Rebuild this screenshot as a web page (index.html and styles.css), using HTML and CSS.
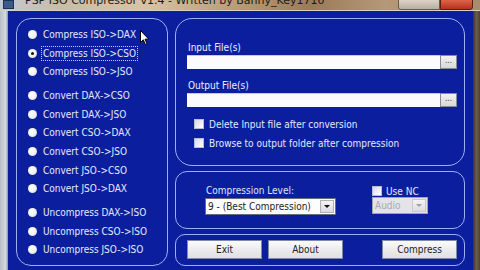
FILE: index.html
```html
<!DOCTYPE html>
<html>
<head>
<meta charset="utf-8">
<title>PSP ISO Compressor</title>
<link rel="stylesheet" href="styles.css">
</head>
<body>
<div class="win">
  <div class="titlebar">
    <div class="ticon"></div>
    <div class="ttext">PSP ISO Compressor v1.4 - Written by Banny_Key1710</div>
    <div class="tfill"></div>
    <div class="tbtns"></div>
    <div class="tclose"></div>
    <div class="tend"></div>
  </div>
  <div class="main">
    <div class="frame-l"></div>
    <div class="client">
      <div class="panel left">
        <div class="group">
          <div class="radio"><span class="dot"></span><span class="lbl">Compress ISO-&gt;DAX</span></div>
          <div class="radio"><span class="dot checked"></span><span class="lbl focus">Compress ISO-&gt;CSO</span></div>
          <div class="radio"><span class="dot"></span><span class="lbl">Compress ISO-&gt;JSO</span></div>
        </div>
        <div class="group">
          <div class="radio"><span class="dot"></span><span class="lbl">Convert DAX-&gt;CSO</span></div>
          <div class="radio"><span class="dot"></span><span class="lbl">Convert DAX-&gt;JSO</span></div>
          <div class="radio"><span class="dot"></span><span class="lbl">Convert CSO-&gt;DAX</span></div>
          <div class="radio"><span class="dot"></span><span class="lbl">Convert CSO-&gt;JSO</span></div>
          <div class="radio"><span class="dot"></span><span class="lbl">Convert JSO-&gt;CSO</span></div>
          <div class="radio"><span class="dot"></span><span class="lbl">Convert JSO-&gt;DAX</span></div>
        </div>
        <div class="group">
          <div class="radio"><span class="dot"></span><span class="lbl">Uncompress DAX-&gt;ISO</span></div>
          <div class="radio"><span class="dot"></span><span class="lbl">Uncompress CSO-&gt;ISO</span></div>
          <div class="radio"><span class="dot"></span><span class="lbl">Uncompress JSO-&gt;ISO</span></div>
        </div>
      </div>
      <div class="rightcol">
        <div class="panel files">
          <div class="flabel">Input File(s)</div>
          <div class="field"><div class="input"></div><div class="browse">...</div></div>
          <div class="flabel out">Output File(s)</div>
          <div class="field"><div class="input"></div><div class="browse">...</div></div>
          <div class="check first"><span class="box"></span><span>Delete Input file after conversion</span></div>
          <div class="check"><span class="box"></span><span>Browse to output folder after compression</span></div>
        </div>
        <div class="panel level">
          <div class="col1">
            <div class="llabel">Compression Level:</div>
            <div class="select"><span class="stext">9 - (Best Compression)</span><span class="arrow"><span class="tri"></span></span></div>
          </div>
          <div class="col2">
            <div class="nc"><span class="box"></span><span>Use NC</span></div>
            <div class="select disabled"><span class="stext">Audio</span><span class="arrow"><span class="tri"></span></span></div>
          </div>
        </div>
        <div class="panel actions">
          <div class="btn">Exit</div>
          <div class="btn">About</div>
          <div class="btn push">Compress</div>
        </div>
      </div>
    </div>
    <div class="frame-r"></div>
  </div>
  <svg class="cursor" width="10" height="16" viewBox="0 0 10 16"><path d="M0.5 0.5 L0.5 12.5 L3.3 9.8 L5.3 14.5 L7 13.8 L5 9.2 L8.8 9.2 Z" fill="#fff" stroke="#000" stroke-width="1"/></svg>
</div>
</body>
</html>
```
FILE: styles.css
```css
html, body {
  margin: 0;
  padding: 0;
}
body {
  width: 480px;
  height: 270px;
  overflow: hidden;
  background: #0b1f9e;
  font-family: "DejaVu Sans Condensed", "DejaVu Sans", sans-serif;
  font-size: 10px;
}
.win {
  position: relative;
  width: 480px;
  height: 270px;
  display: flex;
  flex-direction: column;
}
.titlebar {
  height: 11px;
  display: flex;
  overflow: hidden;
  background: linear-gradient(to right, #c4cad2 0%, #c9bda8 12%, #d8c4a4 30%, #b89a76 50%, #9c7a58 65%, #b49878 80%, #a88c70 100%);
  border-bottom: 1px solid #d8d0c4;
  box-sizing: border-box;
}
.ticon {
  width: 9px;
  height: 7px;
  margin-left: 3px;
  background: #3a5a8a;
  border: 1px solid #203050;
  flex: none;
}
.ttext {
  margin-left: 11px;
  margin-top: -6px;
  font-family: "DejaVu Sans", sans-serif;
  font-size: 11px;
  line-height: 14px;
  color: #1a1a1a;
  white-space: nowrap;
  flex: none;
}
.tfill { flex: 1; }
.tbtns {
  width: 40px;
  margin-top: -2px;
  height: 10px;
  background: linear-gradient(#e0d8cc, #b8ae9e);
  border: 1px solid #6a5a48;
  border-radius: 0 0 0 3px;
  flex: none;
}
.tclose {
  width: 31px;
  margin-top: -2px;
  height: 10px;
  background: linear-gradient(#e06a50, #b8301c);
  border: 1px solid #5a2010;
  border-radius: 0 0 3px 0;
  flex: none;
}
.tend { width: 7px; flex: none; }

.main {
  flex: 1;
  display: flex;
}
.frame-l {
  width: 8px;
  flex: none;
  background: linear-gradient(to right, #b8bec6, #d6dade 70%, #8a929c);
}
.frame-r {
  width: 7px;
  flex: none;
  background: linear-gradient(to right, #3a342e, #6a5e52 50%, #4a4038);
}
.client {
  flex: 1;
  background: #0b1f9e;
  display: flex;
  gap: 7px;
  padding: 7px 8px 4px 8px;
}
.panel {
  border: 1.5px solid #9fb0f2;
  border-radius: 15px;
  box-sizing: border-box;
}
.left {
  width: 152px;
  padding: 6px 0 0 11px;
  display: flex;
  flex-direction: column;
  gap: 5px;
}
.radio {
  height: 18.7px;
  display: flex;
  align-items: center;
  color: #e6e9ff;
  white-space: nowrap;
}
.dot {
  width: 9px;
  height: 9px;
  border-radius: 50%;
  background: radial-gradient(circle at 40% 40%, #ffffff 0%, #f2f2f2 50%, #c8c8c8 100%);
  margin-right: 4px;
  flex: none;
  position: relative;
}
.dot.checked::after {
  content: "";
  position: absolute;
  left: 3px;
  top: 3px;
  width: 3px;
  height: 3px;
  border-radius: 50%;
  background: #111;
}
.lbl {
  padding: 1px 1px;
  border: 1px dotted transparent;
}
.lbl.focus {
  border-color: #c8ccf0;
}

.rightcol {
  width: 290px;
  display: flex;
  flex-direction: column;
  gap: 5px;
}
.files {
  height: 148px;
  border-radius: 17px;
  padding: 23px 7px 0 11px;
}
.flabel {
  color: #eef0ff;
  line-height: 12px;
  height: 12px;
  margin-left: 1px;
  margin-bottom: 1px;
}
.flabel.out { margin-top: 11px; }
.field {
  display: flex;
  height: 14px;
}
.input {
  flex: 1;
  background: #fbfbfd;
  border-top: 1px solid #c8cad8;
}
.browse {
  width: 17px;
  background: linear-gradient(#f2f2f2, #d8d8d8);
  border: 1px solid #8a8a9a;
  box-sizing: border-box;
  color: #333;
  font-size: 8px;
  line-height: 9px;
  text-align: center;
}
.check {
  display: flex;
  align-items: center;
  height: 14px;
  margin-left: 7px;
  color: #e6e9ff;
  white-space: nowrap;
}
.check.first { margin-top: 10px; margin-bottom: 5px; }
.box {
  width: 10px;
  height: 10px;
  background: linear-gradient(135deg, #d8dae4, #ffffff);
  border: 1px solid #b8bcd0;
  box-sizing: border-box;
  margin-right: 5px;
  flex: none;
}

.level {
  height: 58px;
  border-radius: 12px;
  display: flex;
  padding: 13px 0 0 29px;
}
.col1 { width: 131px; }
.col2 { width: 56px; margin-left: 36px; }
.llabel {
  color: #dfe6ff;
  height: 13px;
  line-height: 12px;
  margin-left: 1px;
}
.select {
  height: 17px;
  display: flex;
  align-items: center;
  background: #fdfdfd;
  border: 1px solid #6a6a7a;
  box-sizing: border-box;
  color: #222;
}
.stext {
  flex: 1;
  padding-left: 2px;
  white-space: nowrap;
  overflow: hidden;
}
.arrow {
  width: 14px;
  height: 13px;
  margin-right: 1px;
  background: linear-gradient(#f4f4f4, #dcdcdc);
  border: 1px solid #b0b0b8;
  box-sizing: border-box;
  display: flex;
  align-items: center;
  justify-content: center;
}
.tri {
  width: 0;
  height: 0;
  border-left: 3px solid transparent;
  border-right: 3px solid transparent;
  border-top: 3px solid #111;
}
.select.disabled {
  background: #e4e4e8;
  color: #a8a8b0;
  border-color: #a0a0b0;
}
.select.disabled .tri { border-top-color: #a0a0a8; }
.select.disabled .arrow { border-color: #c8c8d0; }
.nc {
  display: flex;
  align-items: center;
  height: 12px;
  color: #e6e9ff;
}
.nc .box { margin-right: 4px; }

.actions {
  flex: 1;
  border-radius: 10px;
  display: flex;
  gap: 6px;
  padding: 5px 7px 0 11px;
}
.btn {
  width: 75px;
  height: 19px;
  box-sizing: border-box;
  background: linear-gradient(#fbfbfb, #ececee 50%, #e0e0e4);
  border: 1px solid #7e8aa8;
  color: #222;
  text-align: center;
  line-height: 17px;
}
.btn.push { margin-left: auto; }

.cursor {
  position: absolute;
  left: 140px;
  top: 30px;
}
```
